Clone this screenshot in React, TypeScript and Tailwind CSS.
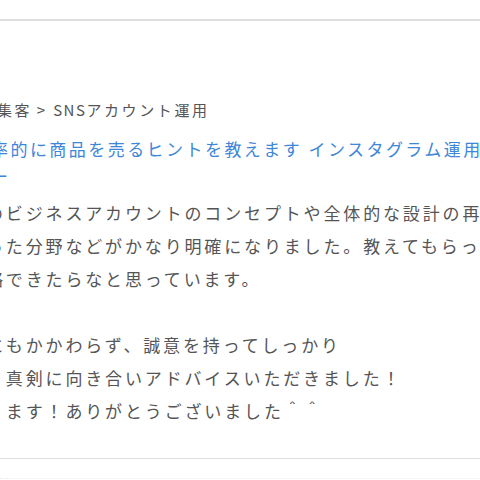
import React from "react";

const jp = { fontFamily: '"Noto Sans CJK JP", "Noto Sans", sans-serif' };

const bodyLines = [
  "のビジネスアカウントのコンセプトや全体的な設計の再",
  "った分野などがかなり明確になりました。教えてもらっ",
  "略できたらなと思っています。",
  "",
  "にもかかわらず、誠意を持ってしっかり",
  "、真剣に向き合いアドバイスいただきました！",
  "ります！ありがとうございました＾＾",
];

export default function App() {
  return (
    <div className="w-[480px] h-[480px] overflow-hidden bg-white" style={jp}>
      <div className="mt-[19px] border-t-2 border-b border-[#dedede]">
        <div className="pt-[77px] pb-[31px]">
          <div className="-ml-[3px] h-[24px] leading-[24px] text-[15px] text-[#555] whitespace-nowrap">
            <span className="tracking-[2.4px]">集客</span>
            <span className="ml-[5px] mr-[8px]">&gt;</span>
            <span className="tracking-[1.5px]">SNS</span>
            <span className="tracking-[2.6px]">アカウント運用</span>
          </div>
          <div className="mt-[13px] -ml-[9px] text-[17px] leading-[27px] tracking-[2.45px] text-[#3d86d8] whitespace-nowrap">
            <div>率的に商品を売るヒントを教えます インスタグラム運用</div>
            <div>ー</div>
          </div>
          <div className="mt-[7px] -ml-[14px] text-[17px] leading-[33px] tracking-[2.85px] text-[#555] whitespace-nowrap">
            {bodyLines.map((l, i) => (
              <div key={i} className="h-[33px]">
                {l}
              </div>
            ))}
          </div>
        </div>
      </div>
      <div className="mt-[19px] border-t border-dotted border-[#ececec]" />
    </div>
  );
}
